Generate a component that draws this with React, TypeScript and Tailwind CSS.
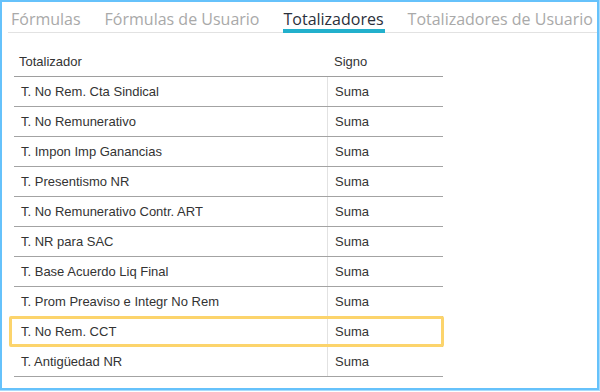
import React from "react";

const tabs = [
  { label: "Fórmulas", active: false },
  { label: "Fórmulas de Usuario", active: false },
  { label: "Totalizadores", active: true },
  { label: "Totalizadores de Usuario", active: false },
];

const rows = [
  "T. No Rem. Cta Sindical",
  "T. No Remunerativo",
  "T. Impon Imp Ganancias",
  "T. Presentismo NR",
  "T. No Remunerativo Contr. ART",
  "T. NR para SAC",
  "T. Base Acuerdo Liq Final",
  "T. Prom Preaviso e Integr No Rem",
  "T. No Rem. CCT",
  "T. Antigüedad NR",
];

export default function App() {
  return (
    <div className="w-[600px] h-[392px] bg-white">
      <div className="w-[599px] h-[390px] border-2 border-[#66c2fb] shadow-[0_0_0_1px_#a9dcfd] bg-white pl-[6px] pr-0 overflow-hidden">
        <div className="flex items-end h-[31px] border-b border-[#e2e2e2] font-['Open_Sans',sans-serif] text-[16px] gap-[22px] pl-[2px]">
          {tabs.map((t) => (
            <div
              key={t.label}
              className={
                t.active
                  ? "relative px-[1px] pb-[3px] text-[#2b303b] leading-[20px]"
                  : "px-[1px] pb-[3px] text-[#a9a9a9] leading-[20px]"
              }
            >
              {t.label}
              {t.active && (
                <span className="absolute left-0 right-0 -bottom-[1px] h-[4px] bg-[#22b0cc]" />
              )}
            </div>
          ))}
        </div>

        <div className="ml-[6px] mt-[14px] w-[429px] font-['Liberation_Sans',Arial,sans-serif] text-[13px] text-[#333]">
          <div className="flex h-[30px] items-center border-b border-[#9e9e9e]">
            <div className="w-[314px] pl-[5px]">Totalizador</div>
            <div className="flex-1 pl-[6px]">Signo</div>
          </div>
          {rows.map((r, i) => (
            <div key={r} className="relative flex h-[30px] border-b border-[#a3a3a3]">
              <div className="w-[314px] pl-[7px] flex items-center border-r border-[#e2e2e2]">{r}</div>
              <div className="flex-1 pl-[7px] flex items-center">Suma</div>
              {i === 8 && (
                <span className="absolute -left-[5px] -right-[1px] -top-[1px] bottom-[-1px] border-[3px] border-[#fcd46c] rounded-[2px]" />
              )}
            </div>
          ))}
        </div>
      </div>
    </div>
  );
}
